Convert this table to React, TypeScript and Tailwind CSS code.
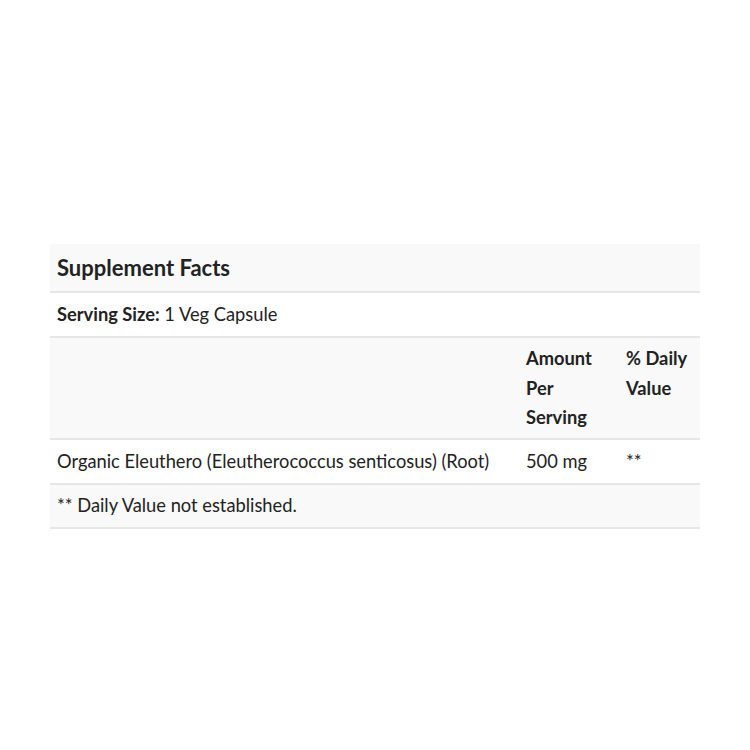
import React from "react";

export default function App() {
  const cell = "px-[7px] py-0 align-middle";
  return (
    <div className="w-[750px] h-[750px] bg-white pt-[244px] pl-[50px]" style={{ fontFamily: "Lato, 'Open Sans', sans-serif" }}>
      <table className="w-[650px] border-collapse text-[18.3px] leading-[29.5px] text-[#222]">
        <colgroup>
          <col className="w-[469px]" />
          <col className="w-[100px]" />
          <col className="w-[81px]" />
        </colgroup>
        <tbody>
          <tr className="bg-[#f9f9f9] border-b-2 border-[#e6e6e6] h-[48px]">
            <td colSpan={3} className="px-[7px] py-0 align-middle text-[22px] font-bold">Supplement Facts</td>
          </tr>
          <tr className="bg-white border-b-2 border-[#e6e6e6] h-[45px]">
            <td colSpan={3} className={cell}>
              <span className="font-bold">Serving Size:</span> 1 Veg Capsule
            </td>
          </tr>
          <tr className="bg-[#f9f9f9] border-b-2 border-[#e6e6e6] h-[102px]">
            <td className={cell}></td>
            <td className="px-[7px] pt-[6px] pb-0 align-top font-bold">Amount Per Serving</td>
            <td className="px-[7px] pt-[6px] pb-0 align-top font-bold">% Daily Value</td>
          </tr>
          <tr className="bg-white border-b-2 border-[#e6e6e6] h-[45px]">
            <td className={cell}>Organic Eleuthero (Eleutherococcus senticosus) (Root)</td>
            <td className={cell}>500&nbsp;mg</td>
            <td className={cell}>**</td>
          </tr>
          <tr className="bg-[#f9f9f9] border-b-2 border-[#e6e6e6] h-[44px]">
            <td colSpan={3} className={cell}>** Daily Value not established.</td>
          </tr>
        </tbody>
      </table>
    </div>
  );
}
